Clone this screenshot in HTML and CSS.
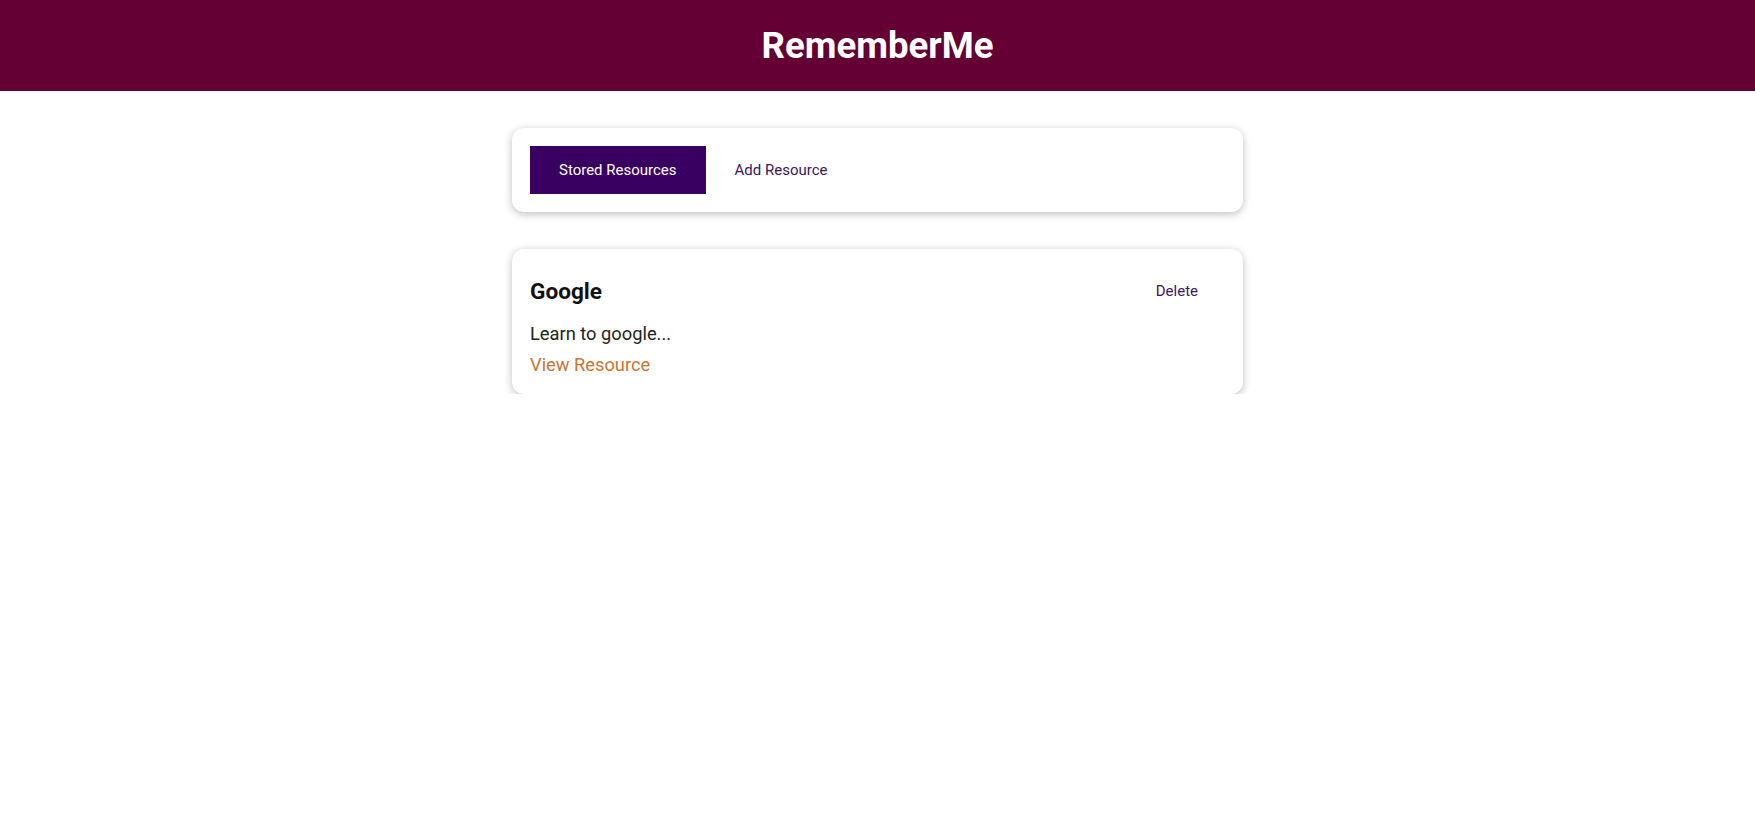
FILE: index.html
```html
<!DOCTYPE html>
<html lang="en">
<head>
<meta charset="utf-8">
<title>RememberMe</title>
<link rel="stylesheet" href="styles.css">
</head>
<body>
<header class="app-header">
  <h1 class="app-title">RememberMe</h1>
</header>
<main class="content">
  <section class="card tabs-card">
    <button class="btn btn-flat btn-active" type="button">Stored Resources</button>
    <button class="btn btn-flat" type="button">Add Resource</button>
  </section>
  <ul class="resource-list">
    <li class="card resource">
      <header class="resource-head">
        <h3 class="resource-title">Google</h3>
        <button class="btn btn-flat btn-delete" type="button">Delete</button>
      </header>
      <p class="resource-desc">Learn to google...</p>
      <footer class="resource-foot">
        <a class="resource-link" href="#">View Resource</a>
      </footer>
    </li>
  </ul>
</main>
</body>
</html>
```

FILE: styles.css
```css
* { box-sizing: border-box; }
html, body {
  margin: 0;
  padding: 0;
  font-family: Roboto, "Liberation Sans", sans-serif;
  background: #ffffff;
}
.app-header {
  height: 91px;
  background: #640033;
  display: flex;
  align-items: center;
  justify-content: center;
}
.app-title {
  margin: 0;
  color: #ffffff;
  font-size: 36.6px;
  font-weight: 700;
}
.content {
  width: 731px;
  margin: 37px auto 0;
  display: flex;
  flex-direction: column;
  gap: 37px;
}
.card {
  background: #fff;
  border-radius: 12px;
  box-shadow: 0 2px 8px rgba(0, 0, 0, 0.26);
}
.tabs-card {
  padding: 18px;
  display: flex;
  align-items: center;
}
.btn {
  font-family: Roboto, "Liberation Sans", sans-serif;
  font-size: 15px;
  height: 48px;
  padding: 0 28px;
  border: 1px solid transparent;
  background: transparent;
  color: #40155e;
  cursor: pointer;
}
.btn-active {
  background: #3a0061;
  border-color: #3a0061;
  color: #fff;
}
.btn-delete {
  padding-right: 26px;
}
.resource-list {
  list-style: none;
  margin: 0;
  padding: 0;
}
.resource {
  padding: 18px 18px 16px;
  height: 145px;
}
.resource-head {
  display: flex;
  justify-content: space-between;
  align-items: center;
  height: 48px;
}
.resource-title {
  margin: 0;
  font-size: 22.6px;
  font-weight: 700;
  color: #111;
}
.resource-desc {
  margin: 5px 0 0;
  font-size: 18.3px;
  color: #222;
  line-height: 27px;
}
.resource-foot {
  margin-top: 4px;
  line-height: 27px;
}
.resource-link {
  font-size: 18.3px;
  color: #c87633;
  text-decoration: none;
}
```
